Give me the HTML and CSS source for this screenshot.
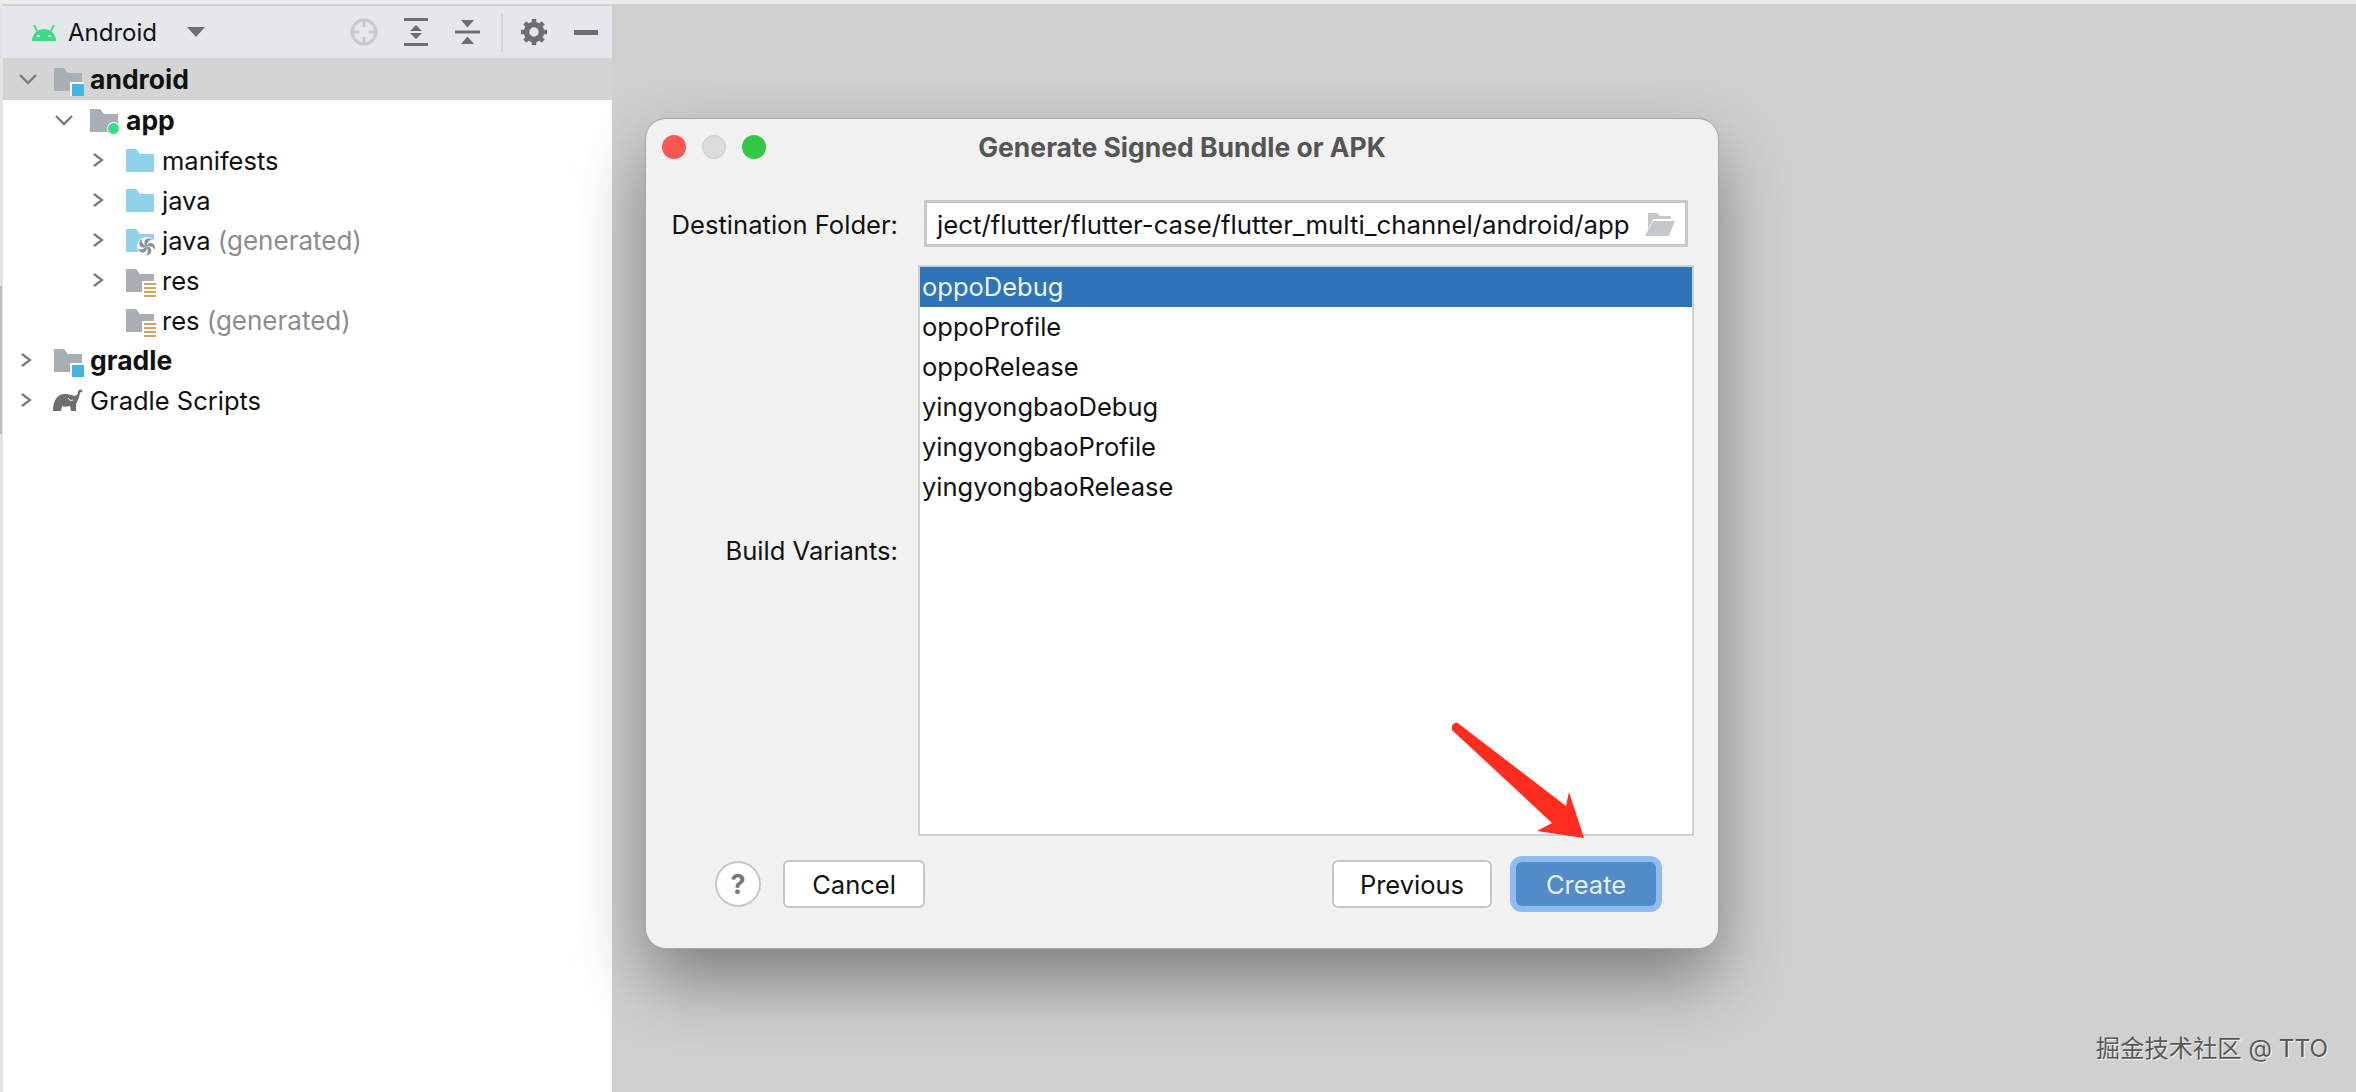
FILE: index.html
```html
<!DOCTYPE html>
<html lang="en">

<head>
    <meta charset="UTF-8">
    <title>Generate Signed Bundle or APK</title>
    <link rel="stylesheet" href="styles.css">
</head>

<body>
    <div class="screen">
        <div class="edge"><span class="edge-thumb"></span></div>
        <aside class="sidebar">
            <div class="toolbar">
                <svg class="android-logo" viewBox="0 0 24 17">
                    <path d="M5 7 2 1M19 7l3-6" stroke="#3ddc84" stroke-width="1.8" fill="none" />
                    <path d="M0 17a12 12 0 0 1 24 0z" fill="#3ddc84" />
                    <circle cx="6.5" cy="12" r="1.2" fill="#fff" />
                    <circle cx="17.5" cy="12" r="1.2" fill="#fff" />
                </svg>
                <span class="toolbar-label">Android</span>
                <svg class="dropdown" viewBox="0 0 18 10">
                    <path d="M0 0h18L9 10z" fill="#6e6e6e" />
                </svg>
                <svg class="tool tool-target" viewBox="0 0 28 28">
                    <circle cx="14" cy="14" r="12" fill="none" stroke="#c8c8c8" stroke-width="3" />
                    <path d="M14 2v7M14 19v7M2 14h7M19 14h7" stroke="#c8c8c8" stroke-width="3" />
                </svg>
                <svg class="tool tool-expand" viewBox="0 0 24 28">
                    <path d="M0 0h24v3H0zM0 25h24v3H0zM12 7l6 6H6zM12 21l-6-6h12z" fill="#6e6e6e" />
                </svg>
                <svg class="tool tool-collapse" viewBox="0 0 25 24">
                    <path d="M0 10.5h25v3H0zM6 0h13l-6.500 7.500zM6 24h13l-6.500-7.500z" fill="#6e6e6e" />
                </svg>
                <span class="toolbar-sep"></span>
                <svg class="tool tool-gear" viewBox="0 0 26 26">
                    <circle cx="13" cy="13" r="7.500" fill="none" stroke="#6e6e6e" stroke-width="5.500" />
                    <path d="M13 0v26M0 13h26M3.800 3.800l18.400 18.400M22.200 3.800 3.800 22.200" stroke="#6e6e6e" stroke-width="4.500" stroke-dasharray="4 18" />
                </svg>
                <span class="tool-minus"></span>
            </div>

            <div class="tree">
                <div class="row row-selected">
                    <svg class="chevron" viewBox="0 0 20 12"><path d="M2 2l8 8 8-8" /></svg>
                    <span class="node-icon">
                        <svg class="folder" viewBox="0 0 28 23"><path class="grey" d="M0 0h10l4 5h14v18H0z" /></svg>
                        <span class="badge-module"></span>
                    </span>
                    <span class="name bold">android</span>
                </div>
                <div class="row level-1">
                    <svg class="chevron" viewBox="0 0 20 12"><path d="M2 2l8 8 8-8" /></svg>
                    <span class="node-icon">
                        <svg class="folder" viewBox="0 0 28 23"><path class="grey" d="M0 0h10l4 5h14v18H0z" /></svg>
                        <span class="badge-dot"></span>
                    </span>
                    <span class="name bold">app</span>
                </div>
                <div class="row level-2">
                    <svg class="chevron" viewBox="0 0 20 14"><path d="M4 1l8 6-8 6" /></svg>
                    <span class="node-icon">
                        <svg class="folder" viewBox="0 0 28 23"><path class="blue" d="M0 0h10l4 5h14v18H0z" /></svg>
                    </span>
                    <span class="name">manifests</span>
                </div>
                <div class="row level-2">
                    <svg class="chevron" viewBox="0 0 20 14"><path d="M4 1l8 6-8 6" /></svg>
                    <span class="node-icon">
                        <svg class="folder" viewBox="0 0 28 23"><path class="blue" d="M0 0h10l4 5h14v18H0z" /></svg>
                    </span>
                    <span class="name">java</span>
                </div>
                <div class="row level-2">
                    <svg class="chevron" viewBox="0 0 20 14"><path d="M4 1l8 6-8 6" /></svg>
                    <span class="node-icon">
                        <svg class="folder" viewBox="0 0 28 23"><path class="blue" d="M0 0h10l4 5h14v18H0z" /></svg>
                        <svg class="badge-fan" viewBox="0 0 20 20">
                            <circle cx="10" cy="10" r="10" fill="#fff" />
                            <g fill="#8a9299">
                                <path id="blade" d="M10 10C7 8 7 4 10 2c3-1 5 0 6 1-3 0-5 2-6 7z" />
                                <use href="#blade" transform="rotate(72 10 10)" />
                                <use href="#blade" transform="rotate(144 10 10)" />
                                <use href="#blade" transform="rotate(216 10 10)" />
                                <use href="#blade" transform="rotate(288 10 10)" />
                            </g>
                        </svg>
                    </span>
                    <span class="name">java <span class="muted">(generated)</span></span>
                </div>
                <div class="row level-2">
                    <svg class="chevron" viewBox="0 0 20 14"><path d="M4 1l8 6-8 6" /></svg>
                    <span class="node-icon">
                        <svg class="folder" viewBox="0 0 28 23"><path class="grey" d="M0 0h10l4 5h14v18H0z" /></svg>
                        <span class="badge-res"></span>
                    </span>
                    <span class="name">res</span>
                </div>
                <div class="row level-2">
                    <span class="chevron"></span>
                    <span class="node-icon">
                        <svg class="folder" viewBox="0 0 28 23"><path class="grey" d="M0 0h10l4 5h14v18H0z" /></svg>
                        <span class="badge-res"></span>
                    </span>
                    <span class="name">res <span class="muted">(generated)</span></span>
                </div>
                <div class="row">
                    <svg class="chevron" viewBox="0 0 20 14"><path d="M4 1l8 6-8 6" /></svg>
                    <span class="node-icon">
                        <svg class="folder" viewBox="0 0 28 23"><path class="grey" d="M0 0h10l4 5h14v18H0z" /></svg>
                        <span class="badge-module"></span>
                    </span>
                    <span class="name bold">gradle</span>
                </div>
                <div class="row">
                    <svg class="chevron" viewBox="0 0 20 14"><path d="M4 1l8 6-8 6" /></svg>
                    <span class="node-icon">
                        <svg class="elephant" viewBox="0 0 30 22">
                            <path d="M0 22C0 13 3 5 12 5c4 0 7 1 9 2 3 0 4-3 4-4 0-2 2-3 4-2 1 1 0 3-1 2-1 0-1 2-2 5-1 3-2 5-3 7v7h-5l-1-5c-3 1-6 1-8 0l-1 5z" fill="#6e6e6e" />
                            <path d="M15 9c1 2 3 3 5 2" stroke="#fff" stroke-width="1" fill="none" />
                        </svg>
                    </span>
                    <span class="name">Gradle Scripts</span>
                </div>
            </div>
        </aside>

        <main class="desktop">
            <section class="dialog">
                <header class="titlebar">
                    <div class="lights">
                        <span class="light light-red"></span>
                        <span class="light light-off"></span>
                        <span class="light light-green"></span>
                    </div>
                    <div class="title">Generate Signed Bundle or APK</div>
                </header>

                <div class="form">
                    <label class="form-label form-label-path">Destination Folder:</label>
                    <div class="path-field">
                        <span class="path-text">ject/flutter/flutter-case/flutter_multi_channel/android/app</span>
                        <svg class="path-folder" viewBox="0 0 30 23">
                            <path d="M3 0h9l3 3h11v3H8L3 17z" fill="#c4c8ca" />
                            <path d="M8 8h22l-6 15H0z" fill="#c4c8ca" />
                        </svg>
                    </div>
                    <label class="form-label">Build Variants:</label>
                    <ul class="variants">
                        <li class="variant-selected">oppoDebug</li>
                        <li>oppoProfile</li>
                        <li>oppoRelease</li>
                        <li>yingyongbaoDebug</li>
                        <li>yingyongbaoProfile</li>
                        <li>yingyongbaoRelease</li>
                    </ul>
                </div>

                <footer class="footer">
                    <button class="help">?</button>
                    <button class="btn btn-cancel">Cancel</button>
                    <span class="spacer"></span>
                    <button class="btn btn-previous">Previous</button>
                    <button class="btn btn-create">Create</button>
                </footer>

                <svg class="arrow" viewBox="0 0 134 120">
                    <path d="M2 4C4 0 7 0 9 2L116 84 119 70 134 116 87 109 102 101 2 8z" fill="#ff2d20" />
                </svg>
            </section>
            <div class="watermark">掘金技术社区 @ TTO</div>
        </main>
    </div>
</body>

</html>
```

FILE: styles.css
```css
* {
    box-sizing: border-box;
}

html,
body {
    margin: 0;
    height: 100%;
}

body {
    font-family: Inter, "Noto Sans CJK SC", sans-serif;
    font-size: 25.5px;
    color: #111;
    background: #d0d0d0;
    overflow: hidden;
}

.screen {
    display: flex;
    height: 1092px;
    border-top: 4px solid #ececec;
}

.edge {
    width: 3px;
    padding-top: 282px;
    background: #e4e4e4;
    flex-shrink: 0;
}

.edge-thumb {
    display: block;
    width: 2px;
    height: 148px;
    background: #bdbdbd;
}

/* left tool window */
.sidebar {
    width: 609px;
    margin-top: 2px;
    background: #fff;
    flex-shrink: 0;
}

.toolbar {
    display: flex;
    align-items: center;
    height: 52px;
    background: #e4e7eb;
}

.android-logo {
    width: 24px;
    height: 17px;
    margin-left: 29px;
}

.toolbar-label {
    margin-left: 12px;
    width: 119px;
    font-size: 24px;
}

.dropdown {
    width: 18px;
    height: 10px;
}

.tool {
    flex-shrink: 0;
}

.tool-target {
    width: 28px;
    height: 28px;
    margin-left: 145px;
}

.tool-expand {
    width: 24px;
    height: 28px;
    margin-left: 26px;
}

.tool-collapse {
    width: 25px;
    height: 24px;
    margin-left: 27px;
}

.toolbar-sep {
    width: 2px;
    height: 39px;
    margin-left: 21px;
    background: #d2d5d9;
}

.tool-gear {
    width: 26px;
    height: 26px;
    margin-left: 18px;
}

.tool-minus {
    width: 24px;
    height: 5px;
    margin-left: 27px;
    background: #6e6e6e;
}

.row {
    display: flex;
    align-items: center;
    height: 40px;
    padding-left: 15px;
}

.row-selected {
    height: 42px;
    background: #d4d4d4;
}

.level-1 {
    padding-left: 51px;
}

.level-2 {
    padding-left: 87px;
}

.chevron {
    display: block;
    width: 20px;
    height: 14px;
    margin-right: 16px;
    flex-shrink: 0;
}

.chevron path {
    fill: none;
    stroke: #7c7c7c;
    stroke-width: 2.400;
}

.node-icon {
    position: relative;
    display: block;
    width: 28px;
    height: 23px;
    margin-right: 8px;
    flex-shrink: 0;
}

.folder {
    display: block;
    width: 28px;
    height: 23px;
}

.grey {
    fill: #a8afb6;
}

.blue {
    fill: #8fd2ea;
}

.badge-module {
    position: absolute;
    left: 18px;
    top: 16px;
    width: 12px;
    height: 12px;
    background: #40b6e0;
    box-shadow: -1px -1px 0 1px #fff;
}

.badge-dot {
    position: absolute;
    left: 18px;
    top: 14px;
    width: 11px;
    height: 11px;
    border-radius: 50%;
    background: #3ddc84;
    box-shadow: 0 0 0 1px #fff;
}

.badge-fan {
    position: absolute;
    left: 11px;
    top: 8px;
    width: 19px;
    height: 19px;
}

.badge-res {
    position: absolute;
    left: 18px;
    top: 14px;
    width: 12px;
    height: 14px;
    background: repeating-linear-gradient(#d4a458 0 2px, #fff 2px 4px);
    box-shadow: -1px -1px 0 1px #fff;
}

.elephant {
    display: block;
    width: 30px;
    height: 22px;
    margin-left: -1px;
}

.name {
    white-space: nowrap;
}

.bold {
    font-size: 26.5px;
    font-weight: 700;
}

.muted {
    font-size: 26px;
    color: #8c8c8c;
}

/* dialog */
.desktop {
    flex: 1;
    padding: 115px 0 0 34px;
    position: relative;
}

.dialog {
    position: relative;
    width: 1072px;
    height: 829px;
    background: #f1f1f1;
    border-radius: 20px;
    box-shadow: 0 0 0 1px #a6a6a6, 0 32px 70px rgba(0, 0, 0, 0.4);
}

.titlebar {
    display: grid;
    grid-template-columns: 1fr auto 1fr;
    align-items: center;
    height: 56px;
    padding: 0 16px;
}

.lights {
    display: flex;
    gap: 16px;
}

.light {
    width: 24px;
    height: 24px;
    border-radius: 50%;
}

.light-red {
    background: #fc5753;
}

.light-off {
    background: #dcdcdc;
    border: 1px solid #ccc;
}

.light-green {
    background: #33c748;
}

.title {
    font-size: 26.5px;
    font-weight: 700;
    color: #555;
}

.form {
    display: grid;
    grid-template-columns: 248px 1fr;
    row-gap: 18px;
    align-items: center;
    padding: 25px 24px 0;
}

.form-label {
    padding-right: 20px;
    font-size: 25.6px;
    text-align: right;
    white-space: nowrap;
}

.form-label-path {
    padding-top: 2px;
}

.path-field {
    display: flex;
    align-items: center;
    justify-content: space-between;
    height: 47px;
    margin: 0 6px;
    padding: 2px 10px 0 10px;
    font-size: 25.8px;
    white-space: nowrap;
    background: #fff;
    border: 3px solid #c8c8c8;
}

.path-folder {
    width: 30px;
    height: 23px;
}

.variants {
    height: 571px;
    margin: 0;
    padding: 0;
    list-style: none;
    background: #fff;
    border: 2px solid #d0d0d0;
}

.variants li {
    height: 40px;
    padding-left: 2px;
    line-height: 39px;
}

.variant-selected {
    background: #2d74b8;
    color: #f0f6fd;
}

.footer {
    display: flex;
    align-items: center;
    margin-top: 24px;
    padding: 0 62px 0 69px;
}

.spacer {
    flex: 1;
}

.help {
    width: 46px;
    height: 46px;
    padding: 0;
    border: 2px solid #c8c8c8;
    border-radius: 50%;
    background: #fff;
    color: #777;
    font: 700 27px Inter, sans-serif;
}

.btn {
    height: 48px;
    padding: 0;
    border: 2px solid #c6c6c6;
    border-radius: 6px;
    background: #fff;
    color: #111;
    font: 25.5px Inter, sans-serif;
}

.btn-cancel {
    width: 142px;
    margin-left: 22px;
}

.btn-previous {
    width: 160px;
}

.btn-create {
    width: 140px;
    height: 44px;
    margin-left: 24px;
    border: 0;
    background: #518bc8;
    color: #e6f0fb;
    box-shadow: 0 0 0 6px #8fbcf0;
}

.arrow {
    position: absolute;
    left: 804px;
    top: 603px;
    width: 134px;
    height: 120px;
}

.watermark {
    position: absolute;
    right: 28px;
    bottom: 28px;
    font-size: 24.3px;
    color: rgba(40, 40, 40, 0.75);
    text-shadow: 1px 1px 0 #f4f4f4;
}
```
